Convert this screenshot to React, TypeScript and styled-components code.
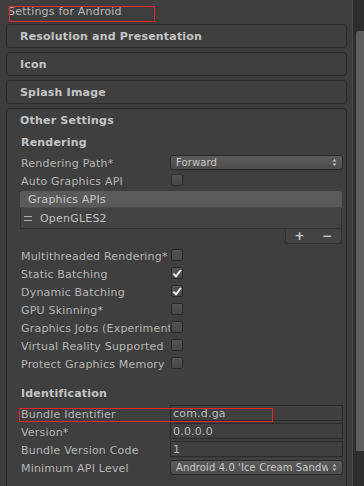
import styled, { createGlobalStyle } from "styled-components"

const Global = createGlobalStyle`
	html, body {
		margin: 0;
		padding: 0;
		background: #3e3e3e;
	}
	body {
		font-family: "DejaVu Sans", "Liberation Sans", sans-serif;
		font-size: 11px;
		letter-spacing: 0.2px;
		color: #b6b6b6;
	}
`

const Window = styled.div`
	position: relative;
	width: 364px;
	height: 486px;
	overflow: hidden;
	display: flex;
	background: #3e3e3e;
`

const Main = styled.div`
	width: 352px;
	display: flex;
	flex-direction: column;
`

const Title = styled.div`
	position: relative;
	height: 24px;
	line-height: 24px;
	padding-left: 8px;
	color: #b9b9b9;
`

const RedMark = styled.div<{ $left: number; $top: number; $w: number; $h: number }>`
	position: absolute;
	left: ${(p) => p.$left}px;
	top: ${(p) => p.$top}px;
	width: ${(p) => p.$w}px;
	height: ${(p) => p.$h}px;
	border: 1px solid #e8262a;
	pointer-events: none;
`

const Foldout = styled.div<{ $open?: boolean }>`
	margin: 0 5px 4px 6px;
	border: 1px solid #2c2c2c;
	border-radius: 4px;
	background: #3f3f3f;
	padding-bottom: ${(p) => (p.$open ? "40px" : "0")};
`

const FoldoutTitle = styled.div`
	height: 22px;
	line-height: 23px;
	padding-left: 13px;
	font-weight: bold;
	color: #c4c4c4;
`

const Heading = styled.div<{ $gap?: number }>`
	margin-top: ${(p) => p.$gap || 0}px;
	height: 21px;
	line-height: 22px;
	padding-left: 14px;
	font-weight: bold;
	color: #c4c4c4;
`

const Row = styled.div`
	position: relative;
	display: flex;
	align-items: center;
	height: 18px;
	padding: 0 3px 0 14px;
`

const Label = styled.div`
	width: 149px;
	flex: none;
	padding-top: 2px;
	white-space: nowrap;
	overflow: hidden;
`

const Popup = styled.div`
	flex: 1;
	height: 13px;
	display: flex;
	align-items: center;
	justify-content: space-between;
	gap: 4px;
	padding: 0 5px;
	border: 1px solid #2a2a2a;
	border-radius: 3px;
	background: linear-gradient(#5c5c5c, #4c4c4c);
	color: #c8c8c8;
	font-size: 10px;
	letter-spacing: 0.1px;
	white-space: nowrap;
	overflow: hidden;
`

const PopupText = styled.span`
	overflow: hidden;
	padding-top: 1px;
`

const TextField = styled.div`
	flex: 1;
	height: 14px;
	line-height: 15px;
	padding-left: 2px;
	border: 1px solid #2b2b2b;
	background: #404040;
	color: #bdbdbd;
`

const Box = styled.div`
	width: 10px;
	height: 10px;
	margin-left: 1px;
	border: 1px solid #2b2b2b;
	border-radius: 2px;
	background: linear-gradient(#545454, #474747);
	display: flex;
	align-items: center;
	justify-content: center;
`

const List = styled.div`
	margin: 2px 4px 2px 13px;
	display: flex;
	flex-direction: column;
`

const ListHeader = styled.div`
	height: 16px;
	line-height: 17px;
	padding-left: 8px;
	background: #5a5a5a;
	border-radius: 3px 3px 0 0;
	border-bottom: 1px solid #4a4a4a;
	color: #c6c6c6;
`

const ListBody = styled.div`
	height: 20px;
	display: flex;
	align-items: center;
	gap: 8px;
	padding-left: 3px;
	background: #434343;
	border: 1px solid #333333;
	border-top: none;
	color: #c0c0c0;
`

const Handle = styled.span`
	width: 8px;
	height: 3px;
	border-top: 1px solid #b0b0b0;
	border-bottom: 1px solid #b0b0b0;
`

const ListFooter = styled.div`
	align-self: flex-end;
	width: 55px;
	height: 14px;
	display: flex;
	align-items: center;
	justify-content: space-around;
	background: #434343;
	border: 1px solid #333333;
	border-top: none;
	border-radius: 0 0 3px 3px;
	color: #c8c8c8;
	font-weight: bold;
	font-size: 12px;
`

const Scrollbar = styled.div`
	width: 12px;
	border-left: 1px solid #4c4c4c;
	background: #2d2d2d;
	padding-left: 3px;
	box-sizing: border-box;
`

const Thumb = styled.div`
	margin-top: 31px;
	height: 420px;
	background: linear-gradient(90deg, #5a5a5a, #636363);
	border-radius: 3px 0 0 0;
`

function Check({ on }: { on?: boolean }) {
	return (
		<Box>
			{on && (
				<svg width="10" height="9" viewBox="0 0 10 9">
					<path d="M1.3 4.6 L4 7.3 L8.9 1" fill="none" stroke="#f0f0f0" strokeWidth="2" />
				</svg>
			)}
		</Box>
	)
}

function Arrows() {
	return (
		<svg width="5" height="9" viewBox="0 0 5 9" style={{ flex: "none" }}>
			<path d="M0.5 3.5 L2.5 1 L4.5 3.5Z M0.5 5.5 L2.5 8 L4.5 5.5Z" fill="#bcbcbc" />
		</svg>
	)
}

const checks: [string, boolean][] = [
	["Multithreaded Rendering*", false],
	["Static Batching", true],
	["Dynamic Batching", true],
	["GPU Skinning*", false],
	["Graphics Jobs (Experimental)*", false],
	["Virtual Reality Supported", false],
	["Protect Graphics Memory", false]
]

export default function App() {
	return (
		<Window>
			<Global />
			<Main>
				<Title>
					Settings for Android
					<RedMark $left={9} $top={6} $w={144} $h={14} />
				</Title>
				<Foldout>
					<FoldoutTitle>Resolution and Presentation</FoldoutTitle>
				</Foldout>
				<Foldout>
					<FoldoutTitle>Icon</FoldoutTitle>
				</Foldout>
				<Foldout>
					<FoldoutTitle>Splash Image</FoldoutTitle>
				</Foldout>
				<Foldout $open>
					<FoldoutTitle>Other Settings</FoldoutTitle>
					<Heading $gap={1}>Rendering</Heading>
					<Row>
						<Label>Rendering Path*</Label>
						<Popup>
							<PopupText>Forward</PopupText>
							<Arrows />
						</Popup>
					</Row>
					<Row>
						<Label>Auto Graphics API</Label>
						<Check />
					</Row>
					<List>
						<ListHeader>Graphics APIs</ListHeader>
						<ListBody>
							<Handle />
							OpenGLES2
						</ListBody>
						<ListFooter>
							<span>+</span>
							<span>−</span>
						</ListFooter>
					</List>
					{checks.map(([label, on]) => (
						<Row key={label}>
							<Label>{label}</Label>
							<Check on={on} />
						</Row>
					))}
					<Heading $gap={11}>Identification</Heading>
					<Row>
						<Label>Bundle Identifier</Label>
						<TextField>com.d.ga</TextField>
						<RedMark $left={12} $top={4} $w={252} $h={12} />
					</Row>
					<Row>
						<Label>Version*</Label>
						<TextField>0.0.0.0</TextField>
					</Row>
					<Row>
						<Label>Bundle Version Code</Label>
						<TextField>1</TextField>
					</Row>
					<Row>
						<Label>Minimum API Level</Label>
						<Popup>
							<PopupText>Android 4.0 'Ice Cream Sandwich' (API level 14)</PopupText>
							<Arrows />
						</Popup>
					</Row>
				</Foldout>
			</Main>
			<Scrollbar>
				<Thumb />
			</Scrollbar>
		</Window>
	)
}
